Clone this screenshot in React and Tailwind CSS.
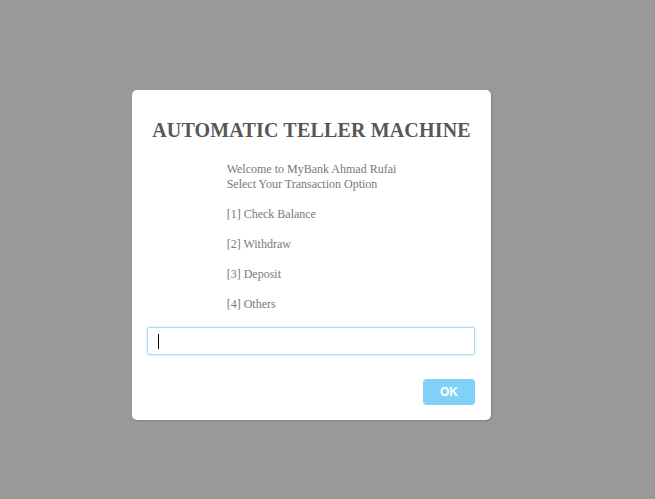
export default function App() {
  const options = ["[1] Check Balance", "[2] Withdraw", "[3] Deposit", "[4] Others"];

  return (
    <main className="min-h-[499px] w-full bg-[#999999] pl-[132px] pt-[90px]">
      <div className="w-[359px] rounded-[5px] bg-white px-[16px] pb-[15px] pt-[28px] shadow-[1px_1px_2px_rgba(0,0,0,0.15)]">
        <h2 className="text-center font-['Liberation_Serif',serif] text-[20px] font-bold leading-[24px] tracking-[0.17px] text-[#575757]">
          AUTOMATIC TELLER MACHINE
        </h2>

        <div className="mt-[20px] flex justify-center">
          <div className="text-left font-['Liberation_Serif',serif] text-[12px] leading-[15px] text-[#797979]">
            <p>Welcome to MyBank Ahmad Rufai</p>
            <p>Select Your Transaction Option</p>
            {options.map((opt) => (
              <p key={opt} className="mt-[15px]">
                {opt}
              </p>
            ))}
          </div>
        </div>

        <div className="relative mt-[15px] ml-[-1px]">
          <input
            type="text"
            className="block h-[28px] w-[328px] rounded-[2px] border border-[#b4dbed] px-[10px] text-[14px] caret-transparent shadow-[0_0_3px_#c4e6f5] outline-none"
          />
          <span className="pointer-events-none absolute left-[11px] top-[7px] h-[15px] w-px bg-black" />
        </div>

        <div className="mt-[24px] flex justify-end">
          <button
            type="button"
            className="h-[26px] w-[52px] rounded-[4px] bg-[#81d2f8] font-['Liberation_Sans',sans-serif] text-[12px] font-bold text-white"
          >
            OK
          </button>
        </div>
      </div>
    </main>
  );
}
